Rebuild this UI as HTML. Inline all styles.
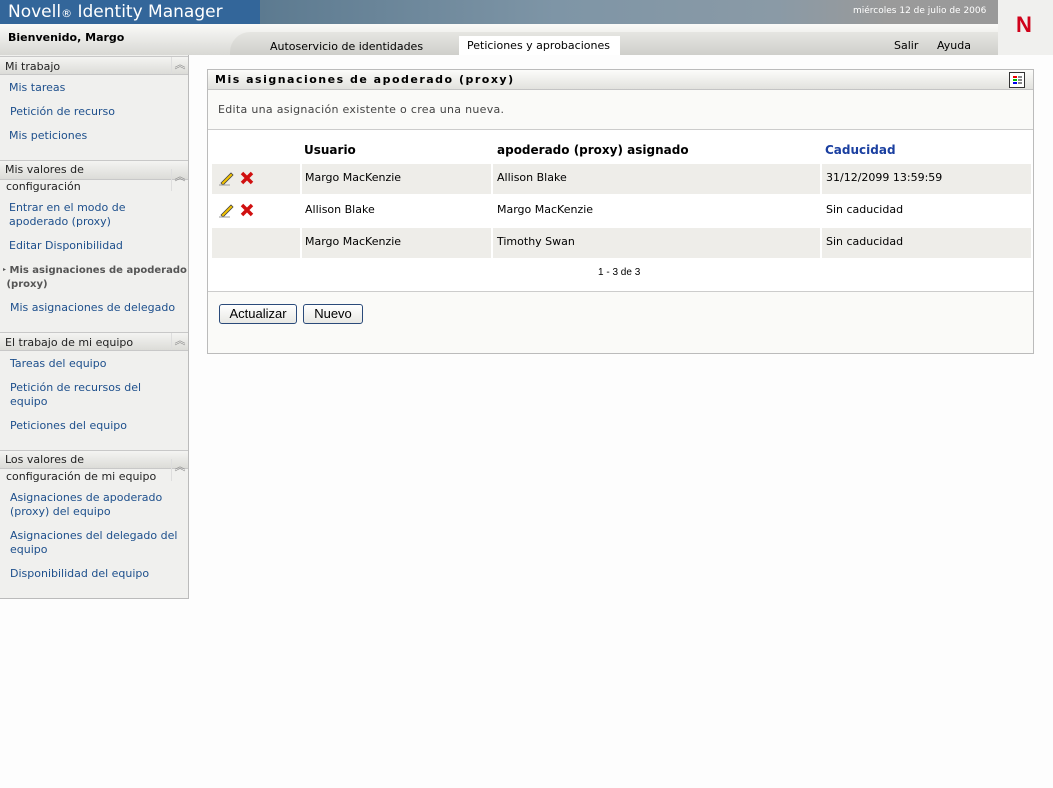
<!DOCTYPE html>
<html><head><meta charset="utf-8"><style>
*{margin:0;padding:0;box-sizing:border-box}
body{width:1053px;height:788px;background:#fdfdfd;font-family:"DejaVu Sans","Liberation Sans",sans-serif;font-size:11px;color:#000;position:relative;overflow:hidden}
.a{position:absolute;white-space:nowrap}
.lnk{color:#1d4f8c}
.sh{position:absolute;left:0;width:188px;background:linear-gradient(#f4f4f2,#dcdcd8);border-top:1px solid #c8c8c8;border-bottom:1px solid #c8c8c8;color:#222;font-size:11px}
.chev{position:absolute;right:0;top:0;width:17px;border-left:1px solid #ddd;height:100%;color:#888;font-size:11px;text-align:center;line-height:16px}
.row{position:absolute;left:212px;width:819px;height:30px;background:#eeede9}
.sep{position:absolute;width:2px;background:#fff}
</style></head><body>
<div class="a" style="left:0;top:0;width:260px;height:24px;background:#33669a"></div>
<div class="a" style="left:260px;top:0;width:738px;height:24px;background:linear-gradient(90deg,#5c7a90,#7e95a6 40%,#8a9aa6 70%,#9a9a9a 85%,#999)"></div>
<div class="a" style="left:8px;top:2px;color:#fff;font-size:17px;font-family:'DejaVu Sans',sans-serif">Novell<span style="font-size:11px">®</span> Identity Manager</div>
<div class="a" style="left:853px;top:6px;color:#fff;font-size:9px">miércoles 12 de julio de 2006</div>
<div class="a" style="left:998px;top:0;width:55px;height:55px;background:#f0f0ee"></div>
<div class="a" style="left:1016px;top:12px;color:#d0021b;font-size:22px;font-weight:bold;font-family:'Liberation Sans',sans-serif">N</div>
<div class="a" style="left:0;top:24px;width:998px;height:31px;background:linear-gradient(#fafaf8,#d8d8d4)"></div>
<div class="a" style="left:230px;top:32px;width:768px;height:23px;background:linear-gradient(#e6e6e2,#cfcfcb);border-top-left-radius:20px"></div>
<div class="a" style="left:8px;top:31px;font-weight:bold;font-size:11px">Bienvenido, Margo</div>
<div class="a" style="left:270px;top:40px;font-size:11px">Autoservicio de identidades</div>
<div class="a" style="left:459px;top:36px;width:161px;height:19px;background:#fff"></div>
<div class="a" style="left:467px;top:39px;font-size:11px">Peticiones y aprobaciones</div>
<div class="a" style="left:894px;top:39px;font-size:11px">Salir</div>
<div class="a" style="left:937px;top:39px;font-size:11px">Ayuda</div>
<div class="a" style="left:0;top:55px;width:189px;height:544px;background:#f0f0ee;border-right:1px solid #bbb;border-bottom:1px solid #bbb"></div>
<div class="sh" style="top:56px;height:19px"><span class="a" style="left:5px;top:3px">Mi trabajo</span><div class="chev">︽</div></div>
<div class="a lnk" style="left:9px;top:81px">Mis tareas</div>
<div class="a lnk" style="left:10px;top:105px">Petición de recurso</div>
<div class="a lnk" style="left:9px;top:129px">Mis peticiones</div>
<div class="sh" style="top:160px;height:20px"><span class="a" style="left:5px;top:2px">Mis valores de</span><div class="chev" style="top:8px;height:22px">︽</div></div>
<div class="a" style="left:6px;top:180px;color:#222">configuración</div>
<div class="a lnk" style="left:9px;top:201px;line-height:14px">Entrar en el modo de<br>apoderado (proxy)</div>
<div class="a lnk" style="left:9px;top:239px">Editar Disponibilidad</div>
<div class="a" style="left:3px;top:263px;line-height:14px;font-weight:bold;color:#555;font-size:10px"><span style="font-size:6px;vertical-align:middle">▸</span> Mis asignaciones de apoderado<br>&nbsp;(proxy)</div>
<div class="a lnk" style="left:10px;top:301px">Mis asignaciones de delegado</div>
<div class="sh" style="top:332px;height:19px"><span class="a" style="left:5px;top:3px">El trabajo de mi equipo</span><div class="chev">︽</div></div>
<div class="a lnk" style="left:10px;top:357px">Tareas del equipo</div>
<div class="a lnk" style="left:10px;top:381px;line-height:14px">Petición de recursos del<br>equipo</div>
<div class="a lnk" style="left:10px;top:419px">Peticiones del equipo</div>
<div class="sh" style="top:450px;height:19px"><span class="a" style="left:5px;top:2px">Los valores de</span><div class="chev" style="top:8px;height:22px">︽</div></div>
<div class="a" style="left:6px;top:470px;color:#222">configuración de mi equipo</div>
<div class="a lnk" style="left:10px;top:491px;line-height:14px">Asignaciones de apoderado<br>(proxy) del equipo</div>
<div class="a lnk" style="left:10px;top:529px;line-height:14px">Asignaciones del delegado del<br>equipo</div>
<div class="a lnk" style="left:10px;top:567px">Disponibilidad del equipo</div>
<div class="a" style="left:207px;top:69px;width:827px;height:285px;border:1px solid #bbb;background:#fafaf8"></div>
<div class="a" style="left:208px;top:70px;width:825px;height:20px;background:linear-gradient(#fcfcfa,#e2e2de);border-bottom:1px solid #c4c4c4"></div>
<div class="a" style="left:215px;top:73px;font-weight:bold;font-size:11px;letter-spacing:1.5px">Mis asignaciones de apoderado (proxy)</div>
<div class="a" style="left:1009px;top:72px;width:16px;height:16px;border:1px solid #333;background:#fff"><div style="position:absolute;left:3px;top:3px;width:4px;height:2px;background:#e00"></div><div style="position:absolute;left:3px;top:6px;width:4px;height:2px;background:#0b0"></div><div style="position:absolute;left:3px;top:9px;width:4px;height:2px;background:#00e"></div><div style="position:absolute;left:8px;top:3px;width:4px;height:8px;background:repeating-linear-gradient(#888 0 2px,#fff 2px 3px)"></div></div>
<div class="a" style="left:218px;top:103px;color:#444;font-size:11px;letter-spacing:.3px">Edita una asignación existente o crea una nueva.</div>
<div class="a" style="left:208px;top:129px;width:825px;height:163px;background:#fff;border-top:1px solid #ccc;border-bottom:1px solid #ccc"></div>
<div class="a" style="left:304px;top:143px;font-weight:bold;font-size:12px">Usuario</div>
<div class="a" style="left:497px;top:143px;font-weight:bold;font-size:12px">apoderado (proxy) asignado</div>
<div class="a" style="left:825px;top:143px;font-weight:bold;font-size:12px;color:#1a3fa0">Caducidad</div>
<div class="row" style="top:164px"></div>
<div class="row" style="top:228px"></div>
<div class="sep" style="left:300px;top:164px;height:30px"></div><div class="sep" style="left:491px;top:164px;height:30px"></div><div class="sep" style="left:820px;top:164px;height:30px"></div>
<div class="sep" style="left:300px;top:228px;height:30px"></div><div class="sep" style="left:491px;top:228px;height:30px"></div><div class="sep" style="left:820px;top:228px;height:30px"></div>
<div class="a" style="left:305px;top:171px">Margo MacKenzie</div><div class="a" style="left:497px;top:171px">Allison Blake</div><div class="a" style="left:826px;top:171px">31/12/2099 13:59:59</div>
<div class="a" style="left:305px;top:203px">Allison Blake</div><div class="a" style="left:497px;top:203px">Margo MacKenzie</div><div class="a" style="left:826px;top:203px">Sin caducidad</div>
<div class="a" style="left:305px;top:235px">Margo MacKenzie</div><div class="a" style="left:497px;top:235px">Timothy Swan</div><div class="a" style="left:826px;top:235px">Sin caducidad</div>
<svg class="a" style="left:218px;top:170px" width="16" height="16"><path d="M3 13 L13 3 L15 5 L5 15Z" fill="#f2c200" stroke="#444" stroke-width=".8"/><path d="M1 15 H12" stroke="#999"/></svg>
<svg class="a" style="left:240px;top:171px" width="14" height="14"><path d="M2 2 L12 12 M12 2 L2 12" stroke="#d01010" stroke-width="3.5"/></svg>
<svg class="a" style="left:218px;top:202px" width="16" height="16"><path d="M3 13 L13 3 L15 5 L5 15Z" fill="#f2c200" stroke="#444" stroke-width=".8"/><path d="M1 15 H12" stroke="#999"/></svg>
<svg class="a" style="left:240px;top:203px" width="14" height="14"><path d="M2 2 L12 12 M12 2 L2 12" stroke="#d01010" stroke-width="3.5"/></svg>
<div class="a" style="left:598px;top:267px;font-family:'Liberation Sans',sans-serif;font-size:10px">1 - 3 de 3</div>
<div class="a" style="left:219px;top:304px;width:78px;height:20px;border:1px solid #2a4a7a;border-radius:3px;background:linear-gradient(#fff,#e8e8e4);font-family:'Liberation Sans',sans-serif;font-size:13px;text-align:center;line-height:18px">Actualizar</div>
<div class="a" style="left:303px;top:304px;width:60px;height:20px;border:1px solid #2a4a7a;border-radius:3px;background:linear-gradient(#fff,#e8e8e4);font-family:'Liberation Sans',sans-serif;font-size:13px;text-align:center;line-height:18px">Nuevo</div>
</body></html>
